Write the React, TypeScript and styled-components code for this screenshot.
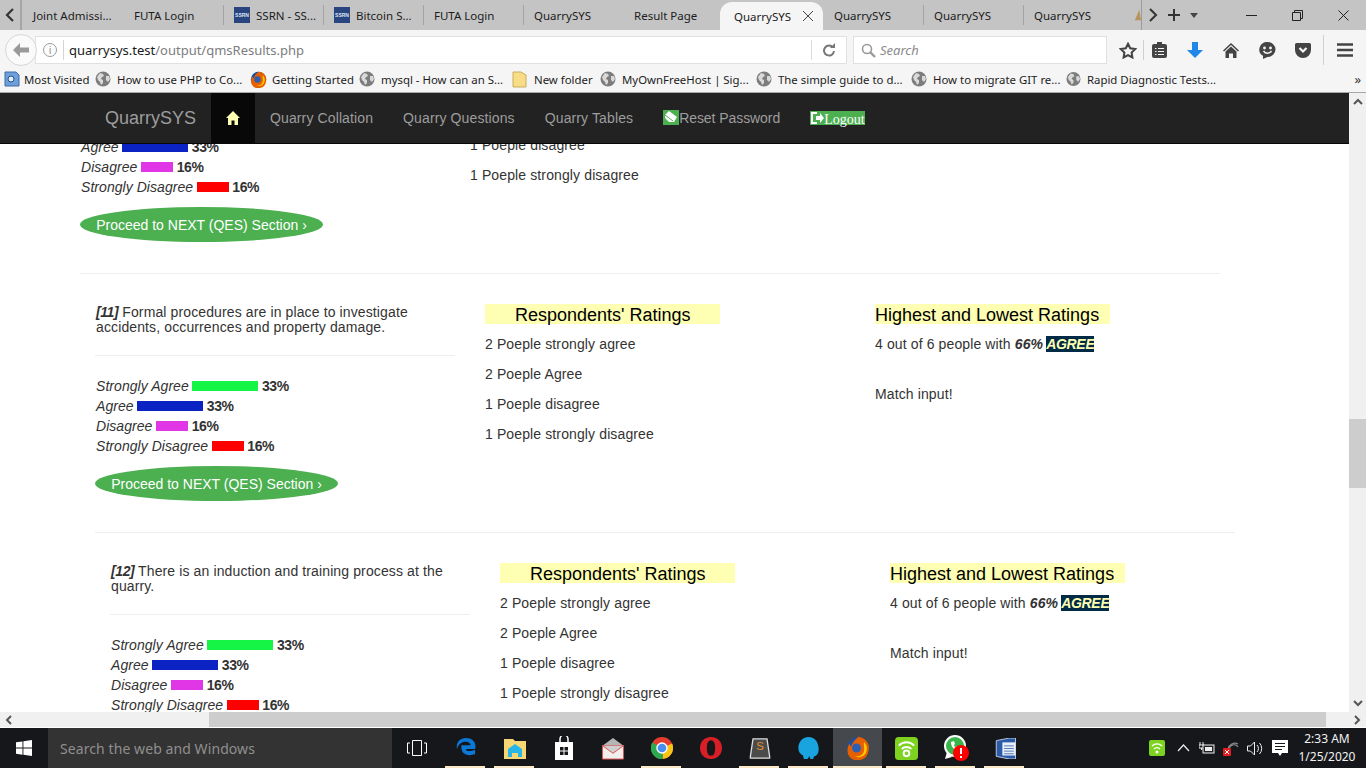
import React from 'react';
import styled, { createGlobalStyle } from 'styled-components';

const GlobalStyle = createGlobalStyle`
  html, body { margin: 0; padding: 0; height: 768px; overflow: hidden; background: #fff; }
  * { box-sizing: border-box; }
  #root { height: 768px; }
`;

const UI_FONT = `"Noto Sans", "Open Sans", "DejaVu Sans", sans-serif`;
const PAGE_FONT = `"Liberation Sans", Arial, sans-serif`;

const Shell = styled.div`
  display: flex;
  flex-direction: column;
  height: 768px;
  width: 1366px;
  overflow: hidden;
`;

/* ---------- browser chrome ---------- */

const TabStrip = styled.div`
  align-items: stretch;
  background: #c4c4c4;
  display: flex;
  flex: none;
  height: 30px;
  overflow: hidden;
`;

const TabArrow = styled.div`
  align-items: center;
  border-right: 2px solid #a5a5a5;
  display: flex;
  flex: none;
  justify-content: center;
  width: 22px;
`;

const Tab = styled.div<{ $width?: number }>`
  align-items: center;
  color: #1c1c1c;
  display: flex;
  flex: none;
  font-family: ${UI_FONT};
  font-size: 11.5px;
  gap: 6px;
  padding-left: 11px;
  position: relative;
  width: ${({ $width }) => $width ?? 100}px;
  white-space: nowrap;

  & + &::before {
    background: #a3a3a3;
    content: '';
    height: 20px;
    left: 0;
    position: absolute;
    top: 5px;
    width: 1px;
  }
`;

const ActiveTab = styled(Tab)`
  background: #f5f5f5;
  border-radius: 12px 12px 0 0;
  justify-content: space-between;
  margin-top: 2px;
  padding-left: 14px;
  padding-right: 9px;
  &::before { display: none; }
  & + div::before { display: none; }
`;

const SsrnIcon = styled.span`
  align-items: center;
  background: #28457f;
  color: #dfe6f2;
  display: inline-flex;
  flex: none;
  font-family: ${PAGE_FONT};
  font-size: 5px;
  font-weight: 700;
  height: 16px;
  justify-content: center;
  width: 16px;
`;

const TabControls = styled.div`
  align-items: center;
  border-left: 1px solid #9c9c9c;
  display: flex;
  flex: none;
  gap: 9px;
  margin-left: 0;
  padding-left: 6px;
  width: 70px;
`;

const WindowButtons = styled.div`
  align-items: center;
  display: flex;
  margin-left: auto;
`;

const WindowButton = styled.div`
  align-items: center;
  display: flex;
  height: 30px;
  justify-content: center;
  width: 46px;
`;

const Toolbar = styled.div`
  align-items: center;
  background: #f5f5f5;
  display: flex;
  flex: none;
  height: 36px;
  padding: 4px 0 0 5px;
`;

const BackButton = styled.div`
  align-items: center;
  background: #fafafa;
  border: 1px solid #d6d6d6;
  border-radius: 50%;
  display: flex;
  flex: none;
  height: 32px;
  justify-content: center;
  width: 32px;
  z-index: 1;
`;

const UrlBar = styled.div`
  align-items: center;
  background: #fff;
  border: 1px solid #e1e1e1;
  display: flex;
  flex: none;
  height: 28px;
  margin-left: -2px;
  padding-left: 7px;
  width: 812px;
`;

const InfoIcon = styled.span`
  align-items: center;
  border: 1px solid #9a9a9a;
  border-radius: 50%;
  color: #8a8a8a;
  display: flex;
  flex: none;
  font-family: ${PAGE_FONT};
  font-size: 10px;
  height: 14px;
  justify-content: center;
  width: 14px;
`;

const UrlDivider = styled.span`
  background: #d4d4d4;
  flex: none;
  height: 20px;
  margin: 0 5px 0 6px;
  width: 1px;
`;

const UrlHost = styled.span`
  color: #1a1a1a;
  font-family: ${UI_FONT};
  font-size: 13px;
`;

const UrlPath = styled.span`
  color: #7d7d7d;
  font-family: ${UI_FONT};
  font-size: 13px;
`;

const ReloadSlot = styled.div`
  align-items: center;
  border-left: 1px solid #dcdcdc;
  display: flex;
  height: 20px;
  justify-content: center;
  margin-left: auto;
  width: 35px;
`;

const SearchBox = styled.div`
  align-items: center;
  background: #fff;
  border: 1px solid #e1e1e1;
  color: #8a8a8a;
  display: flex;
  flex: none;
  font-family: ${UI_FONT};
  font-size: 13px;
  font-style: italic;
  gap: 4px;
  height: 28px;
  margin-left: 6px;
  padding-left: 7px;
  width: 254px;
`;

const ToolIcons = styled.div`
  align-items: center;
  display: flex;
  flex: none;
  height: 28px;
  margin-left: 10px;
`;

const ToolSlot = styled.div<{ $width: number }>`
  align-items: center;
  display: flex;
  justify-content: center;
  width: ${({ $width }) => $width}px;
`;

const ToolSep = styled.span<{ $tall?: boolean }>`
  background: #cfcfcf;
  height: ${({ $tall }) => ($tall ? 30 : 20)}px;
  margin-left: ${({ $tall }) => ($tall ? 0 : 4)}px;
  width: 1px;
`;

const BookmarkBar = styled.div`
  align-items: center;
  background: #f5f5f5;
  border-bottom: 1px solid #a8a8a8;
  display: flex;
  flex: none;
  height: 27px;
  padding-left: 4px;
`;

const Bookmark = styled.div<{ $width: number }>`
  align-items: center;
  color: #1c1c1c;
  display: flex;
  flex: none;
  font-family: ${UI_FONT};
  font-size: 11.4px;
  gap: 6px;
  width: ${({ $width }) => $width}px;
  white-space: nowrap;
`;

const FirstBookmark = styled(Bookmark)`
  gap: 4px;
`;

const FoxBookmark = styled(Bookmark)`
  gap: 5px;
`;

const BookmarkMore = styled.span`
  color: #333;
  font-family: ${UI_FONT};
  font-size: 13px;
  margin-left: auto;
  margin-right: 5px;
`;

/* ---------- page ---------- */

const PageRow = styled.div`
  display: flex;
  flex: none;
  height: 619px;
`;

const Viewport = styled.div`
  flex: 1;
  min-width: 0;
  overflow: hidden;
  position: relative;
`;

const ScrolledContent = styled.div`
  color: #333;
  font-family: ${PAGE_FONT};
  font-size: 14px;
  letter-spacing: 0.12px;
`;

const NavBar = styled.nav`
  align-items: stretch;
  background: #222;
  border-bottom: 1px solid #080808;
  display: flex;
  height: 51px;
  left: 0;
  padding-left: 90px;
  position: absolute;
  right: 0;
  top: 0;
  z-index: 2;
`;

const Brand = styled.div`
  align-items: center;
  color: #9d9d9d;
  display: flex;
  font-family: ${PAGE_FONT};
  font-size: 18px;
  padding: 0 15px;
  width: 121px;
`;

const NavLink = styled.div<{ $active?: boolean }>`
  align-items: center;
  background: ${({ $active }) => ($active ? '#080808' : 'transparent')};
  color: #9d9d9d;
  display: flex;
  font-family: ${PAGE_FONT};
  font-size: 14px;
  letter-spacing: 0.12px;
  padding: 0 15px;
`;

const ResetLink = styled(NavLink)`
  letter-spacing: -0.07px;
`;

const EraserGlyph = styled.svg`
  display: block;
  flex: none;
  margin-top: -2px;
`;

const LogoutLabel = styled.span`
  align-items: center;
  background: #4caf50;
  color: #fff;
  display: flex;
  font-family: "Liberation Serif", "Times New Roman", serif;
  font-size: 14px;
  font-weight: 400;
  height: 14px;
  letter-spacing: 0;
  line-height: 14px;
  margin-top: -1px;
  padding-right: 0;
`;

const LogoutText = styled.span`
  position: relative;
  top: 2px;
`;

const Section = styled.section<{ $indent: number; $trimmed?: boolean }>`
  border-bottom: 1px solid #eee;
  display: grid;
  gap: 30px;
  grid-template-columns: repeat(3, 360px);
  height: ${({ $trimmed }) => ($trimmed ? 181 : 259)}px;
  margin-left: ${({ $indent }) => 80 + $indent * 15}px;
  width: 1140px;
`;

const LeftColumn = styled.div<{ $trimmed?: boolean }>`
  display: flex;
  flex-direction: column;
  padding-top: ${({ $trimmed }) => ($trimmed ? 44 : 31)}px;
`;

const Question = styled.p`
  border-bottom: 1px solid #eee;
  height: 51px;
  line-height: 15px;
  margin: 0 0 20px;
  padding-left: 1px;
`;

const QuestionNumber = styled.b`
  font-style: italic;
  letter-spacing: -0.4px;
`;

const BarRow = styled.div`
  align-items: center;
  display: flex;
  gap: 3.6px;
  height: 20px;
`;

const BarLabel = styled.i`
  letter-spacing: 0.05px;
  margin-left: 1px;
`;

const Bar = styled.span<{ $color: string; $width: number }>`
  background: ${({ $color }) => $color};
  display: block;
  height: 10px;
  width: ${({ $width }) => $width}px;
`;

const BarValue = styled.b`
  letter-spacing: -0.4px;
`;

const ProceedButton = styled.div`
  align-items: center;
  background: #4caf50;
  border-radius: 50%;
  color: #fff;
  display: flex;
  height: 35px;
  justify-content: center;
  letter-spacing: 0;
  margin-top: 10px;
  width: 243px;
`;

const RatingColumn = styled.div<{ $trimmed?: boolean }>`
  padding-top: ${({ $trimmed }) => ($trimmed ? 42 : 30)}px;
`;

const RatingHeading = styled.h4<{ $center?: boolean }>`
  background: #ffffb3;
  color: #000;
  font-size: 18px;
  font-weight: 400;
  height: 20px;
  letter-spacing: 0;
  line-height: 22px;
  margin: 0 0 10px;
  padding-left: ${({ $center }) => ($center ? '30px' : '0')};
  width: 235px;
`;

const RatingLine = styled.p`
  line-height: 20px;
  margin: 0 0 10px;
`;

const MatchLine = styled(RatingLine)`
  margin-top: 30px;
`;

const AgreeTag = styled.b`
  background: #002a45;
  color: #ffffb3;
  font-style: italic;
  letter-spacing: -0.3px;
  margin-left: -1px;
`;

const VScroll = styled.div`
  background: #f0f0f0;
  display: flex;
  flex: none;
  flex-direction: column;
  justify-content: space-between;
  width: 17px;
`;

const ScrollArrow = styled.div`
  align-items: center;
  display: flex;
  flex: none;
  height: 17px;
  justify-content: center;
  width: 17px;
`;

const HScrollArrow = styled(ScrollArrow)`
  height: 15px;
`;

const VThumbTrack = styled.div`
  flex: 1;
  padding-top: 309px;
`;

const VThumb = styled.div`
  background: #cdcdcd;
  height: 69px;
`;

const HScroll = styled.div`
  background: #f0f0f0;
  border-bottom: 1px solid #fff;
  display: flex;
  flex: none;
  height: 16px;
`;

const HThumbTrack = styled.div`
  flex: 1;
  padding: 0 23px 0 192px;
`;

const HThumb = styled.div`
  background: #cdcdcd;
  height: 15px;
`;

/* ---------- taskbar ---------- */

const TaskBar = styled.div`
  align-items: stretch;
  background: #16171b;
  display: flex;
  flex: none;
  height: 40px;
`;

const StartButton = styled.div`
  align-items: center;
  display: flex;
  flex: none;
  justify-content: center;
  width: 48px;
`;

const TaskSearch = styled.div`
  align-items: center;
  background: #333;
  color: #8f8f8f;
  display: flex;
  flex: none;
  font-family: ${UI_FONT};
  font-size: 14px;
  letter-spacing: 0.08px;
  padding-left: 12px;
  width: 344px;
`;

const TaskIcons = styled.div`
  display: flex;
  flex: none;
`;

const TaskIcon = styled.div<{ $active?: boolean; $open?: boolean }>`
  align-items: center;
  background: ${({ $active }) => ($active ? '#45484c' : 'transparent')};
  display: flex;
  height: 40px;
  justify-content: center;
  position: relative;
  width: 49px;

  &::after {
    background: #fbe9c6;
    bottom: 0;
    content: '';
    display: ${({ $open }) => ($open ? 'block' : 'none')};
    height: 2px;
    left: ${({ $active }) => ($active ? 0 : 4)}px;
    position: absolute;
    right: ${({ $active }) => ($active ? 0 : 5)}px;
  }
`;

const TrayArea = styled.div`
  align-items: center;
  display: flex;
  flex: none;
  margin-left: auto;
`;

const TraySlot = styled.div<{ $width: number }>`
  align-items: center;
  display: flex;
  justify-content: center;
  width: ${({ $width }) => $width}px;
`;

const Clock = styled.div`
  color: #f2f2f2;
  font-family: ${UI_FONT};
  font-size: 12px;
  line-height: 18px;
  margin: 0 9px 0 5px;
  text-align: center;
  width: 60px;
`;

/* ---------- drawn icons ---------- */

const Globe = () => (
  <svg width="16" height="16" viewBox="0 0 16 16">
    <circle cx="8" cy="8" r="7.5" fill="#7d7d7d" />
    <path d="M5 2l3 1 1 2-2 1-1 2 2 1 0 3-2 2-1-3-2-2-1-3zM11 5l3 0 1 3-2 3-2-2z" fill="#d9d9d9" />
  </svg>
);

const FirefoxIcon = ({ size = 17 }: { size?: number }) => (
  <svg width={size} height={size} viewBox="0 0 32 32">
    <circle cx="16" cy="16" r="14.5" fill="#1f4f9e" />
    <path d="M16 1.500A14.500 14.500 0 0 1 30 20a14.500 14.500 0 0 1-27 5C1 20 2 14 5 10c0 2 1 3 2 4 1-5 5-9 9-12.500z" fill="#e66000" />
    <path d="M24 8c3 3 5 8 3 13-2 6-9 9-15 6 6 1 11-2 12-7 1-4-1-8 0-12z" fill="#ffcb00" />
    <circle cx="14" cy="16" r="6" fill="#2c5fb3" />
  </svg>
);

const Chevron = () => (
  <svg width="10" height="14" viewBox="0 0 10 14">
    <path d="M8 1L2 7l6 6" fill="none" stroke="#333" strokeWidth="2.2" />
  </svg>
);

const tabs = ['QuarrySYS', 'QuarrySYS', 'QuarrySYS'];

const bars = [
  { label: 'Strongly Agree', color: '#14f545', width: 66, value: '33%' },
  { label: 'Agree', color: '#0c23c4', width: 66, value: '33%' },
  { label: 'Disagree', color: '#e036e6', width: 32, value: '16%' },
  { label: 'Strongly Disagree', color: '#ff0000', width: 32, value: '16%' },
];

const ratings = [
  '2 Poeple strongly agree',
  '2 Poeple Agree',
  '1 Poeple disagree',
  '1 Poeple strongly disagree',
];

/* the widths put each label where the next bookmark starts */
const bookmarks = [
  { label: 'How to use PHP to Co...', width: 155, icon: 'globe' },
  { label: 'Getting Started', width: 109, icon: 'fox' },
  { label: 'mysql - How can an S...', width: 153, icon: 'globe' },
  { label: 'New folder', width: 88, icon: 'folder' },
  { label: 'MyOwnFreeHost | Sig...', width: 156, icon: 'globe' },
  { label: 'The simple guide to d...', width: 155, icon: 'globe' },
  { label: 'How to migrate GIT re...', width: 155, icon: 'globe' },
  { label: 'Rapid Diagnostic Tests...', width: 150, icon: 'globe' },
];

const QuestionBlock = ({ num, lines }: { num: number; lines: string[] }) => (
  <Question>
    <QuestionNumber>[{num}]</QuestionNumber> {lines[0]}
    <br />
    {lines[1]}
  </Question>
);

const RatingsSummary = () => (
  <RatingColumn>
    <RatingHeading>Highest and Lowest Ratings</RatingHeading>
    <RatingLine>
      4 out of 6 people with <b><i>66%</i></b> <AgreeTag>AGREE</AgreeTag>
    </RatingLine>
    <MatchLine>Match input!</MatchLine>
  </RatingColumn>
);

const BarRows = ({ from = 0 }: { from?: number }) => (
  <>
    {bars.slice(from).map((b) => (
      <BarRow key={b.label}>
        <BarLabel>{b.label}</BarLabel>
        <Bar $color={b.color} $width={b.width} />
        <BarValue>{b.value}</BarValue>
      </BarRow>
    ))}
  </>
);

const App = () => (
  <Shell>
    <GlobalStyle />
    <TabStrip>
      <TabArrow>
        <Chevron />
      </TabArrow>
      <Tab $width={101}>Joint Admissi...</Tab>
      <Tab>FUTA Login</Tab>
      <Tab><SsrnIcon>SSRN</SsrnIcon>SSRN - SS...</Tab>
      <Tab><SsrnIcon>SSRN</SsrnIcon>Bitcoin S...</Tab>
      <Tab>FUTA Login</Tab>
      <Tab>QuarrySYS</Tab>
      <Tab $width={97}>Result Page</Tab>
      <ActiveTab $width={103}>
        QuarrySYS
        <svg width="12" height="12" viewBox="0 0 12 12">
          <path d="M1 1l10 10M11 1L1 11" stroke="#444" strokeWidth="1" />
        </svg>
      </ActiveTab>
      {tabs.map((t, i) => (
        <Tab key={i}>{t}</Tab>
      ))}
      <Tab $width={18}>
        <svg width="8" height="14" viewBox="0 0 8 14">
          <path d="M6 1L1 13h7z" fill="#b8935a" />
        </svg>
      </Tab>
      <TabControls>
        <svg width="10" height="14" viewBox="0 0 10 14">
          <path d="M2 1l6 6-6 6" fill="none" stroke="#333" strokeWidth="2" />
        </svg>
        <svg width="14" height="14" viewBox="0 0 14 14">
          <path d="M7 1v12M1 7h12" stroke="#333" strokeWidth="2" />
        </svg>
        <svg width="8" height="5" viewBox="0 0 8 5">
          <path d="M0 0h8L4 5z" fill="#444" />
        </svg>
      </TabControls>
      <WindowButtons>
        <WindowButton>
          <svg width="11" height="11" viewBox="0 0 11 11"><path d="M0 5.500h11" stroke="#222" /></svg>
        </WindowButton>
        <WindowButton>
          <svg width="11" height="11" viewBox="0 0 11 11"><path d="M.5 2.500h8v8h-8zM2.500 2.500v-2h8v8h-2" fill="none" stroke="#222" /></svg>
        </WindowButton>
        <WindowButton>
          <svg width="11" height="11" viewBox="0 0 11 11"><path d="M.5.500l10 10M10.500.500l-10 10" stroke="#222" /></svg>
        </WindowButton>
      </WindowButtons>
    </TabStrip>

    <Toolbar>
      <BackButton>
        <svg width="16" height="14" viewBox="0 0 16 14">
          <path d="M7 0L0 7l7 7V9.500h9v-5H7z" fill="#9a9a9a" />
        </svg>
      </BackButton>
      <UrlBar>
        <InfoIcon>i</InfoIcon>
        <UrlDivider />
        <UrlHost>quarrysys.test</UrlHost>
        <UrlPath>/output/qmsResults.php</UrlPath>
        <ReloadSlot>
          <svg width="14" height="14" viewBox="0 0 14 14">
            <path d="M11 4.500A5 5 0 1 0 12 8" fill="none" stroke="#777" strokeWidth="2" />
            <path d="M8 5h5V0z" fill="#777" />
          </svg>
        </ReloadSlot>
      </UrlBar>
      <SearchBox>
        <svg width="15" height="15" viewBox="0 0 15 15">
          <circle cx="6" cy="6" r="4.500" fill="none" stroke="#9a9a9a" strokeWidth="1.600" />
          <path d="M9.500 9.500L14 14" stroke="#9a9a9a" strokeWidth="2.400" />
        </svg>
        Search
      </SearchBox>
      <ToolIcons>
        <ToolSlot $width={22}>
          <svg width="18" height="17" viewBox="0 0 18 17">
            <path d="M9 1.800l2.200 4.500 5 .7-3.600 3.500.8 5L9 13.100l-4.400 2.400.8-5L1.800 7l5-.7z" fill="none" stroke="#444" strokeWidth="2" />
          </svg>
        </ToolSlot>
        <ToolSep />
        <ToolSlot $width={30}>
          <svg width="15" height="16" viewBox="0 0 15 16">
            <rect x="0" y="2" width="15" height="14" rx="2" fill="#444" />
            <path d="M5 0h5v3H5z" fill="#444" />
            <path d="M3 6.500h1.500M6 6.500h6M3 9.500h1.500M6 9.500h6M3 12.500h1.500M6 12.500h6" stroke="#f5f5f5" strokeWidth="1.200" />
          </svg>
        </ToolSlot>
        <ToolSlot $width={42}>
          <svg width="16" height="16" viewBox="0 0 16 16">
            <path d="M5 0h6v8h5l-8 8-8-8h5z" fill="#1f87e8" />
          </svg>
        </ToolSlot>
        <ToolSlot $width={30}>
          <svg width="16" height="15" viewBox="0 0 16 15">
            <path d="M8 0L0 7.500l1 1L8 2l7 6.500 1-1z" fill="#444" />
            <path d="M8 3.500L2.500 8.500V15H6v-4.500h4V15h3.500V8.500z" fill="#444" />
          </svg>
        </ToolSlot>
        <ToolSlot $width={42}>
          <svg width="17" height="17" viewBox="0 0 17 17">
            <path d="M8.500 0a8 7.500 0 0 1 0 15L4 17v-3.200A8 7.500 0 0 1 8.500 0z" fill="#444" />
            <circle cx="5.500" cy="6" r="1.400" fill="#f5f5f5" />
            <circle cx="11.500" cy="6" r="1.400" fill="#f5f5f5" />
            <path d="M4.500 9c2 3 6 3 8 0" stroke="#f5f5f5" strokeWidth="1.400" fill="none" />
          </svg>
        </ToolSlot>
        <ToolSlot $width={30}>
          <svg width="16" height="15" viewBox="0 0 16 15">
            <path d="M1.500 0h13A1.500 1.500 0 0 1 16 1.500V7a8 8 0 0 1-16 0V1.500A1.500 1.500 0 0 1 1.500 0z" fill="#444" />
            <path d="M4.500 5L8 8.500 11.500 5" stroke="#f5f5f5" strokeWidth="2.200" fill="none" />
          </svg>
        </ToolSlot>
        <ToolSlot $width={10}>
          <ToolSep $tall />
        </ToolSlot>
        <ToolSlot $width={34}>
          <svg width="16" height="14" viewBox="0 0 16 14">
            <path d="M0 1.500h16M0 7h16M0 12.500h16" stroke="#444" strokeWidth="2.600" />
          </svg>
        </ToolSlot>
      </ToolIcons>
    </Toolbar>

    <BookmarkBar>
      <FirstBookmark $width={91}>
        <svg width="16" height="16" viewBox="0 0 16 16">
          <path d="M1 1h11l3 3v11H1z" fill="#6f9fd8" stroke="#3d6aa8" />
          <circle cx="7" cy="8" r="3" fill="#e3eefb" stroke="#23508f" />
        </svg>
        Most Visited
      </FirstBookmark>
      {bookmarks.map((b) =>
        b.icon === 'fox' ? (
          <FoxBookmark key={b.label} $width={b.width}>
            <FirefoxIcon />
            {b.label}
          </FoxBookmark>
        ) : (
          <Bookmark key={b.label} $width={b.width}>
            {b.icon === 'folder' ? (
              <svg width="16" height="17" viewBox="0 0 16 17">
                <path d="M1 1h8l5 3v12H1z" fill="#f8dc86" stroke="#c9ad5d" />
              </svg>
            ) : (
              <Globe />
            )}
            {b.label}
          </Bookmark>
        ),
      )}
      <BookmarkMore>»</BookmarkMore>
    </BookmarkBar>

    <PageRow>
      <Viewport>
        <NavBar>
          <Brand>QuarrySYS</Brand>
          <NavLink $active>
            <svg width="14" height="14" viewBox="0 0 14 14">
              <path d="M7 0L0 7h2v7h3.500V9.500h3V14H12V7h2z" fill="#ffffb3" />
            </svg>
          </NavLink>
          <NavLink>Quarry Collation</NavLink>
          <NavLink>Quarry Questions</NavLink>
          <NavLink>Quarry Tables</NavLink>
          <ResetLink>
            <EraserGlyph width="16" height="15" viewBox="0 0 16 15">
              <path d="M0 0h16v15H0z" fill="#4caf50" />
              <path d="M6 1l8 6-3 5H6L2 8V5z" fill="#fff" />
              <path d="M2 5l8 6" stroke="#4caf50" />
            </EraserGlyph>
            Reset Password
          </ResetLink>
          <NavLink>
            <LogoutLabel>
              <svg width="14" height="14" viewBox="0 0 14 14">
                <path d="M1 1h6v2H3v8h4v2H1z" fill="#fff" />
                <path d="M6 5h4V2l4 5-4 5V9H6z" fill="#fff" />
              </svg>
              <LogoutText>Logout</LogoutText>
            </LogoutLabel>
          </NavLink>
        </NavBar>
        <ScrolledContent>
          <Section $indent={0} $trimmed>
            <LeftColumn $trimmed>
              <BarRows from={1} />
              <ProceedButton>Proceed to NEXT (QES) Section ›</ProceedButton>
            </LeftColumn>
            <RatingColumn $trimmed>
              {ratings.slice(2).map((r) => (
                <RatingLine key={r}>{r}</RatingLine>
              ))}
            </RatingColumn>
          </Section>

          <Section $indent={1}>
            <LeftColumn>
              <QuestionBlock
                num={11}
                lines={['Formal procedures are in place to investigate', 'accidents, occurrences and property damage.']}
              />
              <BarRows />
              <ProceedButton>Proceed to NEXT (QES) Section ›</ProceedButton>
            </LeftColumn>
            <RatingColumn>
              <RatingHeading $center>Respondents' Ratings</RatingHeading>
              {ratings.map((r) => (
                <RatingLine key={r}>{r}</RatingLine>
              ))}
            </RatingColumn>
            <RatingsSummary />
          </Section>

          <Section $indent={2}>
            <LeftColumn>
              <QuestionBlock
                num={12}
                lines={['There is an induction and training process at the', 'quarry.']}
              />
              <BarRows />
            </LeftColumn>
            <RatingColumn>
              <RatingHeading $center>Respondents' Ratings</RatingHeading>
              {ratings.map((r) => (
                <RatingLine key={r}>{r}</RatingLine>
              ))}
            </RatingColumn>
            <RatingsSummary />
          </Section>
        </ScrolledContent>
      </Viewport>
      <VScroll>
        <ScrollArrow><svg width="10" height="7" viewBox="0 0 10 7"><path d="M1 6l4-4 4 4" fill="none" stroke="#555" strokeWidth="2" /></svg></ScrollArrow>
        <VThumbTrack><VThumb /></VThumbTrack>
        <ScrollArrow><svg width="10" height="7" viewBox="0 0 10 7"><path d="M1 1l4 4 4-4" fill="none" stroke="#555" strokeWidth="2" /></svg></ScrollArrow>
      </VScroll>
    </PageRow>
    <HScroll>
      <HScrollArrow><svg width="7" height="10" viewBox="0 0 7 10"><path d="M6 1L2 5l4 4" fill="none" stroke="#555" strokeWidth="2" /></svg></HScrollArrow>
      <HThumbTrack><HThumb /></HThumbTrack>
      <HScrollArrow><svg width="7" height="10" viewBox="0 0 7 10"><path d="M1 1l4 4-4 4" fill="none" stroke="#555" strokeWidth="2" /></svg></HScrollArrow>
    </HScroll>

    <TaskBar>
      <StartButton>
        <svg width="16" height="16" viewBox="0 0 16 16">
          <path d="M0 2.300l6.500-.9v6.200H0zM7.400 1.300L16 0v7.600H7.400zM0 8.500h6.500v6.200L0 13.800zM7.400 8.500H16V16l-8.600-1.200z" fill="#fff" />
        </svg>
      </StartButton>
      <TaskSearch>Search the web and Windows</TaskSearch>
      <TaskIcons>
        <TaskIcon>
          <svg width="20" height="16" viewBox="0 0 20 16">
            <path d="M5.500.5h9v15h-9zM3 3H.5v10H3M17 3h2.500v10H17" fill="none" stroke="#fff" />
          </svg>
        </TaskIcon>
        <TaskIcon $open>
          <svg width="20" height="22" viewBox="0 0 22 24">
            <path d="M11 1C4 1 0 6 1 13 3 7 7 5 11 5c3 0 5 2 5 4H6c-1 8 4 13 15 10v-5c-5 2-10 2-10-1h10C23 6 18 1 11 1z" fill="#0a78d4" />
          </svg>
        </TaskIcon>
        <TaskIcon $open>
          <svg width="22" height="22" viewBox="0 0 22 22">
            <path d="M0 2h9l2 2h11v18H0z" fill="#f7d774" />
            <path d="M4 12l7-5 7 5v8h-4v-4H8v4H4z" fill="#28b5e8" />
          </svg>
        </TaskIcon>
        <TaskIcon>
          <svg width="20" height="24" viewBox="0 0 20 24">
            <path d="M1 6h18v18H1z" fill="#fff" />
            <path d="M6 6V3a4 4 0 0 1 8 0v3" fill="none" stroke="#fff" strokeWidth="1.500" />
            <path d="M6 11h3.500v3.500H6zM10.500 11H14v3.500h-3.500zM6 15.500h3.500V19H6zM10.500 15.500H14V19h-3.500z" fill="#16171b" />
          </svg>
        </TaskIcon>
        <TaskIcon>
          <svg width="24" height="23" viewBox="0 0 24 24">
            <path d="M1 9L12 1l11 8v14H1z" fill="#b5b5b5" />
            <path d="M1 9h22v14H1z" fill="#f1eeee" stroke="#d94d4d" />
            <path d="M1 9l11 8 11-8" fill="#cfcfcf" stroke="#d94d4d" />
          </svg>
        </TaskIcon>
        <TaskIcon $open>
          <svg width="22" height="22" viewBox="0 0 24 24">
            <circle cx="12" cy="12" r="12" fill="#e33b2e" />
            <path d="M12 12L23 7a12 12 0 0 1-10 17z" fill="#f8c517" />
            <path d="M12 12l1 12A12 12 0 0 1 1.500 6z" fill="#2da94f" />
            <circle cx="12" cy="12" r="5.500" fill="#4a8df0" stroke="#fff" strokeWidth="1.500" />
          </svg>
        </TaskIcon>
        <TaskIcon>
          <svg width="22" height="22" viewBox="0 0 24 24">
            <path d="M12 0C4 0 0 6 0 12s4 12 12 12 12-6 12-12S20 0 12 0zm0 3.500c3.500 0 4.500 4 4.500 8.500s-1 8.500-4.500 8.500S7.500 16.500 7.500 12 8.500 3.500 12 3.500z" fill="#d81f26" />
          </svg>
        </TaskIcon>
        <TaskIcon $open>
          <svg width="22" height="21" viewBox="0 0 24 24">
            <path d="M4 1h16l3 20v2H1v-2z" fill="#4b4b4b" stroke="#ddd" strokeWidth="1.500" />
            <text x="12" y="14" fill="#e8912d" fontFamily="Liberation Sans" fontSize="13" textAnchor="middle">S</text>
          </svg>
        </TaskIcon>
        <TaskIcon $open>
          <svg width="23" height="24" viewBox="0 0 24 26">
            <path d="M12 1c7 0 11 6 11 13s-4 8-5 8l-1 3h-3l-1-3-2 3H7l-1-4c-3-1-5-4-5-8C1 7 5 1 12 1z" fill="#19a3df" />
          </svg>
        </TaskIcon>
        <TaskIcon $active $open>
          <FirefoxIcon size={24} />
        </TaskIcon>
        <TaskIcon $open>
          <svg width="23" height="23" viewBox="0 0 24 24">
            <rect width="24" height="24" rx="4" fill="#7ed321" />
            <path d="M4 9a11 11 0 0 1 16 0M7 12.500a7 7 0 0 1 10 0" fill="none" stroke="#fff" strokeWidth="2" />
            <circle cx="12" cy="17" r="3" fill="none" stroke="#fff" strokeWidth="2" />
          </svg>
        </TaskIcon>
        <TaskIcon $open>
          <svg width="26" height="26" viewBox="0 0 26 26">
            <circle cx="12" cy="11" r="10" fill="#3ab54a" stroke="#fff" strokeWidth="2" />
            <path d="M2 24l2-7 5 5z" fill="#fff" />
            <path d="M8 7c0 5 3 8 8 8l1-3-3-1-1 1c-1 0-2-1-2-2l1-1-1-3z" fill="#fff" />
            <circle cx="18" cy="18" r="8" fill="#f00" />
            <path d="M18 13v6M18 21v2" stroke="#fff" strokeWidth="2" />
          </svg>
        </TaskIcon>
        <TaskIcon $open>
          <svg width="22" height="21" viewBox="0 0 24 24">
            <path d="M2 3l15-3h7v24h-7L2 21z" fill="#2a5aa8" stroke="#cbd7ea" />
            <path d="M9 5h15v15H9z" fill="#e9eef7" />
            <path d="M11 9h11M11 12h11M11 15h11M11 18h11" stroke="#3f6cb5" />
          </svg>
        </TaskIcon>
      </TaskIcons>
      <TrayArea>
        <TraySlot $width={26}>
          <svg width="16" height="16" viewBox="0 0 16 16">
            <rect width="16" height="16" rx="2" fill="#7ed321" />
            <path d="M3 6a7 7 0 0 1 10 0M5 9a4 4 0 0 1 6 0" fill="none" stroke="#fff" strokeWidth="1.400" />
            <circle cx="8" cy="12" r="1.500" fill="#fff" />
          </svg>
        </TraySlot>
        <TraySlot $width={26}>
          <svg width="13" height="8" viewBox="0 0 13 8"><path d="M1 7l5.500-6L12 7" fill="none" stroke="#eee" strokeWidth="1.200" /></svg>
        </TraySlot>
        <TraySlot $width={22}>
          <svg width="16" height="14" viewBox="0 0 16 14">
            <path d="M1 1v3M4 1v3M0 4h5v3H0zM2.500 7v2" stroke="#eee" fill="none" />
            <rect x="4" y="4" width="11" height="8" fill="#222" stroke="#eee" />
            <rect x="6" y="6" width="7" height="4" fill="#eee" />
          </svg>
        </TraySlot>
        <TraySlot $width={25}>
          <svg width="16" height="16" viewBox="0 0 16 16">
            <path d="M5 9a7 7 0 0 1 10-5M7 12a4 4 0 0 1 8-5" fill="none" stroke="#888" strokeWidth="1.200" />
            <rect x="0" y="8" width="8" height="8" rx="1" fill="#e02020" />
            <path d="M2 10l4 4M6 10l-4 4" stroke="#fff" />
          </svg>
        </TraySlot>
        <TraySlot $width={24}>
          <svg width="17" height="15" viewBox="0 0 17 15">
            <path d="M.5 5h3l4-4v13l-4-4h-3z" fill="none" stroke="#eee" />
            <path d="M10 4a5 5 0 0 1 0 7M12.500 2a8 8 0 0 1 0 11" fill="none" stroke="#eee" />
          </svg>
        </TraySlot>
        <TraySlot $width={25}>
          <svg width="16" height="17" viewBox="0 0 16 17">
            <path d="M0 0h16v13h-6l-2 3-2-3H0z" fill="#fff" />
            <path d="M3 3.500h10M3 6.500h10M3 9.500h7" stroke="#16171b" />
          </svg>
        </TraySlot>
        <Clock>
          2:33 AM
          <br />
          1/25/2020
        </Clock>
      </TrayArea>
    </TaskBar>
  </Shell>
);

export default App;
